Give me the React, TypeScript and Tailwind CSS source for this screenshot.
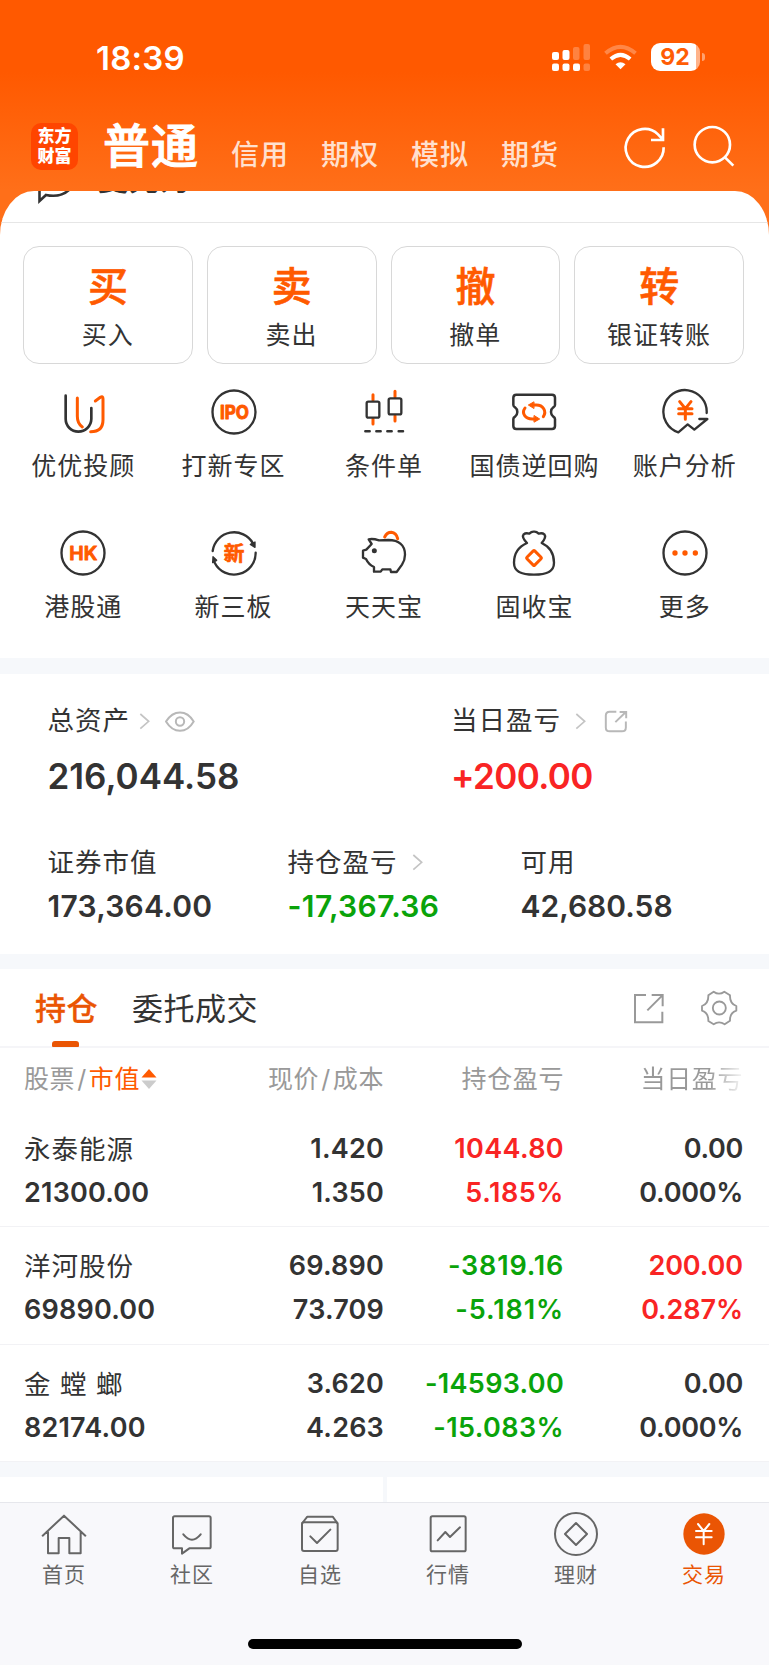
import type { ReactNode } from "react";

const DARK = "#333";
const ORANGE = "#ff5a00";

type IconProps = { box: string; size?: string; children: ReactNode };

function Icon({ box, size = "size-12", children }: IconProps) {
  return (
    <svg viewBox={box} className={`${size} block shrink-0`} fill="none" strokeLinecap="round" strokeLinejoin="round">
      {children}
    </svg>
  );
}

function StatusBar() {
  return (
    <div className="flex h-[115px] items-start justify-between pr-[64px] pl-[96px]">
      <div className="mt-[38px] text-[33px] leading-[40px] font-semibold tracking-[0.2px]">18:39</div>
      <div className="mt-[43px] flex items-center">
        <svg viewBox="0 0 38 28" className="h-7 w-[38px]" fill="#fff">
          <rect x="0" y="9" width="7" height="8" rx="2" />
          <rect x="10.500" y="7" width="7" height="10" rx="2" />
          <rect x="21" y="4" width="6.500" height="13" rx="2" opacity=".25" />
          <rect x="31.500" y="1" width="6.500" height="16" rx="2" opacity=".25" />
          <rect x="0" y="20.500" width="7" height="7.500" rx="2" />
          <rect x="10.500" y="20.500" width="7" height="7.500" rx="2" />
          <rect x="21" y="20.500" width="7" height="7.500" rx="2" />
          <rect x="31.500" y="20.500" width="6.500" height="7.500" rx="2" opacity=".25" />
        </svg>
        <svg viewBox="658 132 98 78" className="ml-[14px] h-[26px] w-[33px]" fill="none" stroke="#fff">
          <path d="M662 160Q707 121 752 160" strokeWidth="12" opacity=".28" />
          <path d="M678 177Q707 152 736 177" strokeWidth="12" />
          <path d="M692 193Q707 180 722 193L707 208Z" fill="#fff" stroke="none" />
        </svg>
        <div className="ml-[14px] flex items-center">
          <div className="h-7 w-[49px] rounded-[9px] bg-[linear-gradient(90deg,#fff_45px,#ffb38a_45px)] pr-px text-center text-[23px] leading-[28px] font-bold text-[#ff5d05]">
            92
          </div>
          <div className="ml-[2px] h-2 w-[3px] rounded-r-full bg-[#ffa26f]" />
        </div>
      </div>
    </div>
  );
}

function TopNav() {
  return (
    <div className="flex h-[76px] items-start">
      <div className="mt-2 ml-[31px] flex size-[47px] flex-col items-center justify-center rounded-[10px] bg-[#ff4500] text-[17px] leading-[19.500px] font-black">
        <span>东方</span>
        <span>财富</span>
      </div>
      <div className="mt-[1px] ml-[25px] text-[47px] leading-[60px] font-medium tracking-[1px] [-webkit-text-stroke:1px_#fff]">普通</div>
      <div className="mt-[20px] ml-[32px] flex gap-[32px] text-[28px] leading-[40px] font-medium tracking-[1px] text-[#ffe0cf]">
        <span>信用</span>
        <span>期权</span>
        <span>模拟</span>
        <span>期货</span>
      </div>
      <svg viewBox="712 368 144 144" className="mt-[8px] ml-[62px] size-12" fill="none" stroke="#fff" strokeWidth="8">
        <path d="M840 441A57 57 0 1 1 823 402L837 417M838 384V419H802" />
      </svg>
      <svg viewBox="918 368 144 144" className="mt-[8px] ml-[21px] size-12" fill="none" stroke="#fff" strokeWidth="8">
        <circle cx="985" cy="433" r="53" />
        <path d="M1023 471L1048 496" />
      </svg>
    </div>
  );
}

const trades = [
  ["买", "买入"],
  ["卖", "卖出"],
  ["撤", "撤单"],
  ["转", "银证转账"],
];

const services: { name: string; icon: ReactNode }[] = [
  {
    name: "优优投顾",
    icon: (
      <Icon box="177 475 144 144">
        <path d="M232 505V560Q232 582 247 592M286 514L301 503Q309 498 309 507V570Q309 606 272 606" stroke={ORANGE} strokeWidth="9" />
        <path d="M197 498V568A38 38 0 0 0 235 606A39 39 0 0 0 274 568V535" stroke={DARK} strokeWidth="8" />
      </Icon>
    ),
  },
  {
    name: "打新专区",
    icon: (
      <Icon box="629 475 144 144">
        <circle cx="701" cy="547" r="64.500" stroke={DARK} strokeWidth="7" />
        <g stroke={ORANGE} strokeWidth="3">
          <text x="659" y="568" fontSize="57" fontWeight="700" textLength="87" lengthAdjust="spacingAndGlyphs" fill={ORANGE}>
            IPO
          </text>
        </g>
      </Icon>
    ),
  },
  {
    name: "条件单",
    icon: (
      <Icon box="1080 475 144 144">
        <path d="M1119 495V512M1119 567V583M1185 485V502M1185 558V574" stroke={ORANGE} strokeWidth="9" />
        <rect x="1100" y="516" width="38" height="48" rx="5" stroke={DARK} strokeWidth="7" />
        <rect x="1166" y="506" width="38" height="48" rx="5" stroke={DARK} strokeWidth="7" />
        <path d="M1096 605H1109M1129 605H1142M1162 605H1175M1196 605H1209" stroke={DARK} strokeWidth="7.500" />
      </Icon>
    ),
  },
  {
    name: "国债逆回购",
    icon: (
      <Icon box="379 475 144 144">
        <path
          d="M398 495H505Q514 495 514 504V526Q514 530 509 533Q502 538 502 547Q502 556 509 561Q514 564 514 568V589Q514 598 505 598H398Q389 598 389 589V568Q389 564 394 561Q401 556 401 547Q401 538 394 533Q389 530 389 526V504Q389 495 398 495Z"
          stroke={DARK}
          strokeWidth="7.500"
        />
        <path d="M424 535C412 552 426 568 446 568H454M479 561C490 544 478 526 458 526H448" stroke={ORANGE} strokeWidth="9" />
        <path d="M452 558L468 568L452 577ZM450 517L434 526L450 536Z" fill={ORANGE} stroke={ORANGE} strokeWidth="3" />
      </Icon>
    ),
  },
  {
    name: "账户分析",
    icon: (
      <Icon box="830 475 144 144">
        <path d="M967 550A65 65 0 1 0 882 608L910 584L930 600L969 568H945" stroke={DARK} strokeWidth="7" />
        <path d="M886 516L903 537L920 516M903 537V569M883 537H923M883 552H923" stroke={ORANGE} strokeWidth="9" />
      </Icon>
    ),
  },
  {
    name: "港股通",
    icon: (
      <Icon box="177 147 144 144">
        <circle cx="249" cy="219" r="64.500" stroke={DARK} strokeWidth="7" />
        <g stroke={ORANGE} strokeWidth="3">
          <text x="208" y="240" fontSize="57" fontWeight="600" textLength="84" lengthAdjust="spacingAndGlyphs" fill={ORANGE}>
            HK
          </text>
        </g>
      </Icon>
    ),
  },
  {
    name: "新三板",
    icon: (
      <Icon box="629 147 144 144">
        <path d="M637 213A65 65 0 0 1 758 190M766 218A65 65 0 0 1 643 248" stroke={DARK} strokeWidth="7" />
        <path d="M750 193L764 186V202ZM637 248L638 230L649 241Z" fill={DARK} stroke={DARK} strokeWidth="4" />
        <text x="701" y="242" fontSize="62" fontWeight="700" textAnchor="middle" fill={ORANGE} stroke={ORANGE} strokeWidth="2">
          新
        </text>
      </Icon>
    ),
  },
  {
    name: "天天宝",
    icon: (
      <Icon box="1080 147 144 144">
        <path
          d="M1106 178L1115 192L1099 209L1089 212V233L1098 237Q1106 254 1122 261V275H1142L1147 268H1171L1173 276H1190L1206 254Q1215 240 1215 224C1215 195 1195 180 1165 180L1137 181Q1118 175 1106 178Z"
          stroke={DARK}
          strokeWidth="7"
        />
        <circle cx="1123" cy="212" r="7.500" fill={DARK} />
        <path d="M1154 171Q1161 157 1174 157Q1189 159 1193 176" stroke={ORANGE} strokeWidth="9" />
      </Icon>
    ),
  },
  {
    name: "固收宝",
    icon: (
      <Icon box="379 147 144 144">
        <path
          d="M430 189Q413 172 420 163Q426 158 437 161Q444 154 451 155Q458 154 465 161Q476 158 482 163Q489 172 474 189C498 200 511 222 511 248C511 277 486 284 451 284C416 284 391 277 391 248C391 222 405 200 430 189Z"
          stroke={DARK}
          strokeWidth="7"
        />
        <rect x="434.500" y="217.500" width="33" height="33" rx="3" transform="rotate(45 451 234)" stroke={ORANGE} strokeWidth="9" />
      </Icon>
    ),
  },
  {
    name: "更多",
    icon: (
      <Icon box="830 147 144 144">
        <circle cx="902" cy="219" r="64.500" stroke={DARK} strokeWidth="7" />
        <g fill={ORANGE}>
          <circle cx="872" cy="219" r="8" />
          <circle cx="902" cy="219" r="8" />
          <circle cx="933" cy="219" r="8" />
        </g>
      </Icon>
    ),
  },
];

function Chevron() {
  return (
    <svg viewBox="417 129 33 51" className="h-[17px] w-[11px] shrink-0" fill="none" stroke="#c4c4c4" strokeWidth="5">
      <path d="M421 132L446 154L421 176" />
    </svg>
  );
}

const RED = "text-[#f92424]";
const GREEN = "text-[#0aa30a]";

type Cell = [text: string, style: string];
type Holding = { name: string; value: string; price: string; cost: string; pl: Cell; plPct: Cell; day: Cell; dayPct: Cell };

const holdings: Holding[] = [
  {
    name: "永泰能源",
    value: "21300.00",
    price: "1.420",
    cost: "1.350",
    pl: ["1044.80", `${RED} tracking-[0.35px]`],
    plPct: ["5.185%", `${RED} tracking-[0.55px]`],
    day: ["0.00", "tracking-[-0.3px]"],
    dayPct: ["0.000%", "tracking-[-0.3px]"],
  },
  {
    name: "洋河股份",
    value: "69890.00",
    price: "69.890",
    cost: "73.709",
    pl: ["-3819.16", `${GREEN} tracking-[0.8px]`],
    plPct: ["-5.181%", `${GREEN} tracking-[0.9px]`],
    day: ["200.00", `${RED} tracking-[-0.1px]`],
    dayPct: ["0.287%", `${RED} tracking-[-0.1px]`],
  },
  {
    name: "金 螳 螂",
    value: "82174.00",
    price: "3.620",
    cost: "4.263",
    pl: ["-14593.00", `${GREEN} tracking-[0.3px]`],
    plPct: ["-15.083%", `${GREEN} tracking-[0.4px]`],
    day: ["0.00", "tracking-[-0.3px]"],
    dayPct: ["0.000%", "tracking-[-0.3px]"],
  },
];

function HoldingRow({ h }: { h: Holding }) {
  return (
    <div className="grid h-[117.300px] grid-cols-[180px_180px_180px_179px] border-b border-[#f2f2f5] pt-[17px] pl-6 text-[27px] leading-[44px] font-semibold tracking-[0.2px]">
      <div>
        <div className="text-[26.500px] font-normal tracking-[1px]">{h.name}</div>
        <div>{h.value}</div>
      </div>
      <div className="text-right">
        <div>{h.price}</div>
        <div>{h.cost}</div>
      </div>
      <div className="text-right">
        <div className={h.pl[1]}>{h.pl[0]}</div>
        <div className={h.plPct[1]}>{h.plPct[0]}</div>
      </div>
      <div className="text-right">
        <div className={h.day[1]}>{h.day[0]}</div>
        <div className={h.dayPct[1]}>{h.dayPct[0]}</div>
      </div>
    </div>
  );
}

const tabs: { name: string; icon: ReactNode }[] = [
  { name: "首页", icon: <Icon box="121 210 144 144"><path d="M129 287L193 227L257 287M145 275V340H177V294H209V340H243V275" /></Icon> },
  { name: "社区", icon: <Icon box="505 210 144 144"><path d="M525 229H628Q633 229 633 234V320Q633 325 628 325H569L547 341V325H525Q520 325 520 320V234Q520 229 525 229ZM551 283Q577 315 603 283" /></Icon> },
  { name: "自选", icon: <Icon box="888 210 144 144"><rect x="906" y="247" width="107" height="86" rx="6" /><path d="M907 249L922 230H998L1012 249M931 289L951 309L991 269" /></Icon> },
  { name: "行情", icon: <Icon box="120 210 144 144"><rect x="140" y="229" width="105" height="105" rx="5" /><path d="M161 301L184 276L198 291L228 262" /></Icon> },
  { name: "理财", icon: <Icon box="504 210 144 144"><circle cx="576" cy="282" r="63" /><path d="M576 249L609 282L576 315L543 282Z" /></Icon> },
  { name: "交易", icon: <Icon box="888 210 144 144"><circle cx="960" cy="282" r="62" fill="#ea5504" stroke="none" /><path d="M942 252L959 273L976 252M959 273V313M936 273H983M936 292H983" stroke="#fff" /></Icon> },
];

export default function App() {
  return (
    <div className="flex h-[1665px] w-[769px] flex-col overflow-hidden bg-white font-['Inter','Noto_Sans_CJK_SC',sans-serif] text-[#333]">
      <div className="h-[246px] shrink-0 bg-[linear-gradient(180deg,#ff5900_0px,#ff5900_72px,#ff6f19_190px)] text-white">
        <StatusBar />
        <TopNav />
        <div className="h-[55px] overflow-hidden bg-white text-[#333] [border-radius:34px_34px_0_0/44px_44px_0_0]">
          <div className="flex h-[32px] items-start overflow-hidden border-b border-[#e6e6e6]">
            <svg viewBox="0 0 36 14" className="ml-[36px] h-[14px] w-9" fill="none" stroke="#333" strokeWidth="2.600">
              <path d="M3.500 0V10L10 4Q24 7 33 -1" />
            </svg>
            <div className="-mt-[30px] ml-[26px] text-[30px] leading-[36px] font-medium tracking-[1px]">夏先为</div>
          </div>
        </div>
      </div>

      <div className="grid shrink-0 grid-cols-4 gap-[14px] pr-[25px] pl-[23px]">
        {trades.map(([mark, label]) => (
          <div key={label} className="flex h-[118px] flex-col items-center rounded-2xl border border-[#d8d8d8]">
            <div className="mt-[15px] text-[40px] leading-[50px] font-medium text-[#ff5a00] [-webkit-text-stroke:0.6px_#ff5a00]">{mark}</div>
            <div className="mt-[5px] text-[25px] leading-[36px] tracking-[1px]">{label}</div>
          </div>
        ))}
      </div>
      <div className="grid h-[294px] shrink-0 grid-cols-5 pt-[24px] pr-[9px] pl-2">
        {services.map((s) => (
          <div key={s.name} className="flex h-[141px] flex-col items-center">
            {s.icon}
            <div className="mt-[12px] text-[25px] leading-[36px] tracking-[1px] whitespace-nowrap">{s.name}</div>
          </div>
        ))}
      </div>
      <div className="h-4 shrink-0 bg-[#f6f8fb]" />

      <section className="h-[280px] shrink-0 pl-[47.500px]">
        <div className="flex pt-[27px]">
          <div className="w-[403.500px]">
            <div className="flex h-10 items-center">
              <span className="text-[26.500px] tracking-[1px]">总资产</span>
              <span className="ml-[9px]"><Chevron /></span>
              <svg viewBox="495 122 90 62" className="ml-[15px] h-[21px] w-[30px]" fill="none" stroke="#b8b8b8" strokeWidth="6">
                <path d="M498 153Q515 126 540 126Q565 126 581 153Q565 181 540 181Q515 181 498 153Z" />
                <circle cx="540" cy="153" r="12.500" />
              </svg>
            </div>
            <div className="mt-[13px] text-[35px] leading-[44px] font-semibold">216,044.58</div>
          </div>
          <div>
            <div className="flex h-10 items-center">
              <span className="text-[26.500px] tracking-[1px]">当日盈亏</span>
              <span className="ml-[14px]"><Chevron /></span>
              <svg viewBox="663 121 72 70" className="ml-[18px] h-[23px] w-6" fill="none" stroke="#b8b8b8" strokeWidth="6">
                <path d="M700 126H680Q668 126 668 138V174Q668 186 680 186H717Q729 186 729 174V156M697 158L729 127M710 127H730V146" />
              </svg>
            </div>
            <div className="mt-[13px] text-[35px] leading-[44px] font-semibold tracking-[-0.6px] text-[#f92424]">+200.00</div>
          </div>
        </div>
        <div className="mt-[44px] flex text-[30px] leading-[44px] font-semibold">
          <div className="w-[240px]">
            <div className="flex h-10 items-center text-[26.500px] font-normal tracking-[1px]">证券市值</div>
            <div className="mt-[2px] tracking-[0.25px]">173,364.00</div>
          </div>
          <div className="w-[233px]">
            <div className="flex h-10 items-center text-[26.500px] font-normal tracking-[1px]">
              持仓盈亏<span className="ml-[14px]"><Chevron /></span>
            </div>
            <div className="mt-[2px] tracking-[0.4px] text-[#0aa30a]">-17,367.36</div>
          </div>
          <div>
            <div className="flex h-10 items-center text-[26.500px] font-normal tracking-[1px]">可用</div>
            <div className="mt-[2px]">42,680.58</div>
          </div>
        </div>
      </section>
      <div className="h-[15px] shrink-0 bg-[#f6f8fb]" />

      <div className="flex h-[79px] shrink-0 items-start border-b-2 border-[#f5f5f8] text-[31px] leading-[40px]">
        <div className="ml-[35px] flex flex-col items-start pt-[20px] font-medium tracking-[0.500px] text-[#ea5504] [-webkit-text-stroke:0.3px_#ea5504]">
          持仓
          <div className="mt-[12px] ml-[17px] h-[6px] w-[27px] rounded-t-[3px] rounded-b-[1px] bg-[#ea5504]" />
        </div>
        <div className="ml-[34px] pt-[20px] tracking-[0.500px]">委托成交</div>
        <svg viewBox="747 127 96 96" className="mt-[24px] ml-auto size-8" fill="none" stroke="#999" strokeWidth="6">
          <path d="M786 133H753V215H835V183M790 179L835 134M803 133H836V167" />
        </svg>
        <svg viewBox="948 121 112 108" className="mt-[21px] mr-[31px] ml-[35px] h-9 w-[38px]" fill="none" stroke="#999" strokeWidth="5.500" strokeLinejoin="round">
          <path d="M988 126Q1004 138 1020 126L1037 137Q1036 162 1056 169V183Q1036 190 1037 213L1021 224Q1004 212 988 224L972 214Q973 190 953 183V169Q973 162 972 137Z" />
          <circle cx="1005" cy="175" r="19.500" />
        </svg>
      </div>

      <div className="grid h-[62px] shrink-0 grid-cols-[180px_180px_180px_179px] pt-[11px] pl-6 text-[25px] leading-[40px] tracking-[0.600px] text-[#999]">
        <div className="flex h-10 items-center">
          股票<span className="px-[2px]">/</span><span className="text-[#ff5a00]">市值</span>
          <svg viewBox="0 0 16 22" className="ml-[1px] h-[22px] w-4">
            <path d="M8 1L15.500 9.500H.500Z" fill="#ff5a00" />
            <path d="M8 21L15.500 12.500H.500Z" fill="#ccc" />
          </svg>
        </div>
        <div className="text-right">现价<span className="px-[2px]">/</span>成本</div>
        <div className="text-right">持仓盈亏</div>
        <div className="bg-[linear-gradient(90deg,#999_145px,#99999900_182px)] bg-clip-text text-right text-transparent">当日盈亏</div>
      </div>
      <div className="shrink-0">
        {holdings.map((h) => (
          <HoldingRow key={h.name} h={h} />
        ))}
      </div>
      <div className="h-[15.500px] shrink-0 bg-[#f6f8fb]" />
      <div className="flex h-[25px] shrink-0 gap-1 bg-[#f6f8fb]">
        <div className="flex-1 bg-white" />
        <div className="flex-1 bg-white" />
      </div>

      <nav className="flex flex-1 flex-col border-t border-[#e6e7ec] bg-[#f8f8fb]">
        <div className="grid w-[768px] grid-cols-6 pt-[7px]">
          {tabs.map((t) => (
            <div key={t.name} className={`flex flex-col items-center stroke-[#666] stroke-[6px] ${t.name === "交易" ? "text-[#ea5504]" : "text-[#666]"}`}>
              {t.icon}
              <div className="mt-[2px] stroke-none text-[21px] leading-[30px] tracking-[1px]">{t.name}</div>
            </div>
          ))}
        </div>
        <div className="mt-[49px] h-[10px] w-[274px] self-center rounded-full bg-black" />
      </nav>
    </div>
  );
}
